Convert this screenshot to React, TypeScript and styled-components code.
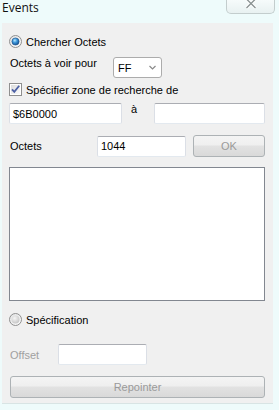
import React, { FC } from 'react'
import styled, { createGlobalStyle } from 'styled-components'

const GlobalStyle = createGlobalStyle`
  html, body {
    margin: 0;
    padding: 0;
    background-color: #eefbfb;
  }
  body {
    font-family: "Liberation Sans", Arial, sans-serif;
    font-size: 11px;
    color: #000;
  }
`

const Window = styled.div`
  width: 279px;
  height: 410px;
  display: flex;
  flex-direction: column;
  background-color: #eefbfb;
  overflow: hidden;
`

const TitleBar = styled.div`
  height: 23px;
  display: flex;
  justify-content: space-between;
  align-items: flex-start;
  flex-shrink: 0;
`

const Title = styled.span`
  font-family: "Open Sans", "Noto Sans", sans-serif;
  font-size: 12px;
  line-height: 15px;
  padding: 0 0 0 2px;
  color: #111;
`

const CloseButton = styled.div`
  width: 47px;
  height: 13px;
  margin-right: 4px;
  border: 1px solid #c3cdcd;
  border-top: none;
  border-radius: 0 0 5px 5px;
  background: linear-gradient(#f6fbfb, #e8f1f1);
  display: flex;
  justify-content: center;
  align-items: flex-start;
`

const Panel = styled.div`
  width: 271px;
  height: 381px;
  margin-left: 2px;
  background-color: #f0f0f0;
  border-bottom: 1px solid #d8e4e4;
  padding: 0 8px 0 7px;
  box-sizing: border-box;
  display: flex;
  flex-direction: column;
`

const Row = styled.div<{ $top: number, $indent?: number }>`
  display: flex;
  align-items: center;
  margin-top: ${p => p.$top}px;
  padding-left: ${p => p.$indent || 0}px;
`

const Label = styled.span<{ $width?: number, $disabled?: boolean, $raised?: boolean, $indent?: number }>`
  width: ${p => p.$width ? `${p.$width}px` : 'auto'};
  box-sizing: border-box;
  padding-left: ${p => p.$indent ?? 1}px;
  align-self: ${p => p.$raised ? 'flex-start' : 'center'};
  flex-shrink: 0;
  color: ${p => p.$disabled ? '#a0a0a0' : '#000'};
  white-space: nowrap;
`

const OptionText = styled.span`
  margin-left: 4px;
  white-space: nowrap;
`

const TextBox = styled.div<{ $width: number }>`
  width: ${p => p.$width}px;
  height: 21px;
  box-sizing: border-box;
  background: #fff;
  border: 1px solid #dbdfe6;
  border-top-color: #abadb3;
  border-bottom-color: #e3e9ef;
  border-radius: 2px;
  padding: 0 3px;
  display: flex;
  align-items: center;
  flex-shrink: 0;
`

const Select = styled.div`
  width: 49px;
  height: 21px;
  box-sizing: border-box;
  background: #fff;
  border: 1px solid #acacac;
  border-radius: 3px;
  padding: 0 5px 0 4px;
  display: flex;
  align-items: center;
  justify-content: space-between;
`

const Button = styled.div<{ $width?: number, $gap?: number }>`
  width: ${p => p.$width ? `${p.$width}px` : '100%'};
  margin-left: ${p => p.$gap || 0}px;
  height: 22px;
  box-sizing: border-box;
  border: 1px solid #adb2b5;
  border-radius: 3px;
  background: linear-gradient(#f4f4f4 0%, #efefef 45%, #e2e2e2 50%, #d9d9d9 100%);
  color: #9a9a9a;
  display: flex;
  align-items: center;
  justify-content: center;
  flex-shrink: 0;
`

const ListBox = styled.div`
  height: 134px;
  box-sizing: border-box;
  margin-top: 10px;
  background: #fff;
  border: 1px solid #828790;
`

const Radio: FC<{ checked?: boolean }> = ({ checked }) => (
  <svg width="13" height="13" viewBox="0 0 13 13">
    <defs>
      <linearGradient id="rg-out" x1="0" y1="0" x2="1" y2="1">
        <stop offset="0" stopColor="#e2e3e4" />
        <stop offset="1" stopColor="#fdfdfd" />
      </linearGradient>
      <radialGradient id="rg-dot" cx="0.4" cy="0.35" r="0.7">
        <stop offset="0" stopColor="#b7e8ff" />
        <stop offset="0.45" stopColor="#3a94d8" />
        <stop offset="1" stopColor="#104a8c" />
      </radialGradient>
      <radialGradient id="rg-off" cx="0.4" cy="0.35" r="0.7">
        <stop offset="0" stopColor="#f6f6f6" />
        <stop offset="1" stopColor="#c4c4c4" />
      </radialGradient>
    </defs>
    <circle cx="6.5" cy="6.5" r="6" fill="url(#rg-out)" stroke="#8f8f8f" />
    {checked
      ? <circle cx="6.5" cy="6.5" r="3.6" fill="url(#rg-dot)" stroke="#1b4f86" strokeWidth="0.6" />
      : <circle cx="6.5" cy="6.5" r="4" fill="url(#rg-off)" />}
  </svg>
)

const CheckBox: FC = () => (
  <svg width="13" height="13" viewBox="0 0 13 13">
    <defs>
      <linearGradient id="cb-in" x1="0" y1="0" x2="1" y2="1">
        <stop offset="0" stopColor="#dcdcdc" />
        <stop offset="1" stopColor="#fbfbfb" />
      </linearGradient>
    </defs>
    <rect x="0.5" y="0.5" width="12" height="12" fill="#fff" stroke="#8f8f8f" />
    <rect x="2" y="2" width="9" height="9" fill="url(#cb-in)" />
    <path d="M3 6.3 L5.3 8.8 L10.2 2.8" fill="none" stroke="#4d61a5" strokeWidth="1.8" />
  </svg>
)

const Chevron: FC = () => (
  <svg width="7" height="5" viewBox="0 0 7 5">
    <path d="M0.5 1 L3.5 4 L6.5 1" fill="none" stroke="#8a8a8a" strokeWidth="1.2" />
  </svg>
)

const CloseGlyph: FC = () => (
  <svg width="12" height="9" viewBox="0 0 12 9">
    <path d="M1.5 -1 L10.5 8 M10.5 -1 L1.5 8" stroke="#fff" strokeWidth="3.2" />
    <path d="M1.5 -1 L10.5 8 M10.5 -1 L1.5 8" stroke="#8b9494" strokeWidth="1.4" />
  </svg>
)

export default function App() {
  return (
    <>
      <GlobalStyle />
      <Window>
        <TitleBar>
          <Title>Events</Title>
          <CloseButton><CloseGlyph /></CloseButton>
        </TitleBar>
        <Panel>
          <Row $top={12}>
            <Radio checked />
            <OptionText>Chercher Octets</OptionText>
          </Row>
          <Row $top={9}>
            <Label $width={104} $raised>Octets à voir pour</Label>
            <Select>FF<Chevron /></Select>
          </Row>
          <Row $top={5}>
            <CheckBox />
            <OptionText>Spécifier zone de recherche de</OptionText>
          </Row>
          <Row $top={7}>
            <TextBox $width={113}>$6B0000</TextBox>
            <Label $width={32} $indent={9} $raised>à</Label>
            <TextBox $width={111} />
          </Row>
          <Row $top={11}>
            <Label $width={88}>Octets</Label>
            <TextBox $width={89}>1044</TextBox>
            <Button $width={72} $gap={7}>OK</Button>
          </Row>
          <ListBox />
          <Row $top={12}>
            <Radio />
            <OptionText>Spécification</OptionText>
          </Row>
          <Row $top={18}>
            <Label $width={49} $disabled>Offset</Label>
            <TextBox $width={89} />
          </Row>
          <Row $top={11} $indent={1}>
            <Button>Repointer</Button>
          </Row>
        </Panel>
      </Window>
    </>
  )
}
